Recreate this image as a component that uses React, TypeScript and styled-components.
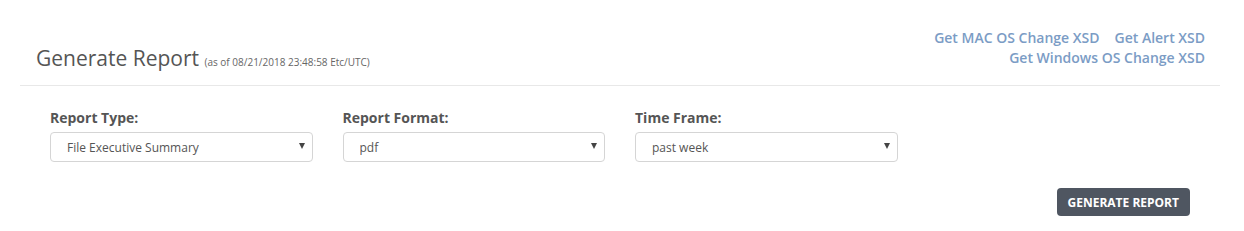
import React from "react";
import styled, { createGlobalStyle } from "styled-components";

const Global = createGlobalStyle`
  html, body { margin: 0; padding: 0; background: #fff; }
  body { font-family: "Open Sans", "Liberation Sans", sans-serif; color: #555; }
  * { box-sizing: border-box; }
`;

const Page = styled.div`
  width: 1244px;
  height: 231px;
  background: #fff;
`;

const Header = styled.div`
  margin: 0 24px 0 20px;
  padding: 28px 15px 17px 16px;
  display: flex;
  justify-content: space-between;
  align-items: flex-end;
  border-bottom: 1px solid #e8e8e8;
`;

const Title = styled.h1`
  margin: 0 0 -6px 0;
  font-size: 21px;
  font-weight: 400;
  line-height: 24px;
  color: #555;
`;

const Sub = styled.small`
  font-size: 10px;
  color: #666;
`;

const Links = styled.div`
  display: flex;
  flex-direction: column;
  align-items: flex-end;
  font-size: 14px;
  line-height: 20px;
`;

const LinkRow = styled.div`
  display: flex;
  gap: 15px;
`;

const Link = styled.a`
  color: #7b9cc5;
  font-weight: 600;
  text-decoration: none;
`;

const Form = styled.div`
  width: 1170px;
  margin: 22px 0 0 35px;
`;

const Row = styled.div`
  display: grid;
  grid-template-columns: repeat(4, 292.5px);
`;

const Col = styled.div`
  padding: 0 15px;
`;

const Label = styled.label`
  display: block;
  font-size: 14px;
  font-weight: 700;
  line-height: 20px;
  color: #555;
  margin-bottom: 4px;
`;

const SelectWrap = styled.div`
  position: relative;
`;

const Select = styled.select`
  appearance: none;
  -webkit-appearance: none;
  width: 100%;
  height: 30px;
  border: 1px solid #d5d5d5;
  border-radius: 4px;
  background: #fff;
  padding: 1px 24px 0 16px;
  font-family: "Open Sans", "Liberation Sans", sans-serif;
  font-size: 12px;
  color: #555;
  outline: none;
`;

const Arrow = styled.span`
  position: absolute;
  right: 8px;
  top: 11px;
  width: 0;
  height: 0;
  border-left: 3.5px solid transparent;
  border-right: 3.5px solid transparent;
  border-top: 6px solid #444;
  pointer-events: none;
`;

const Actions = styled.div`
  display: flex;
  justify-content: flex-end;
  padding: 0 15px;
  margin-top: 26px;
`;

const Button = styled.button`
  height: 28px;
  padding: 0 11px;
  border: none;
  border-radius: 4px;
  background: #4f5661;
  color: #fff;
  font-family: "Open Sans", "Liberation Sans", sans-serif;
  font-size: 12px;
  font-weight: 700;
  text-transform: uppercase;
`;

const fields = [
  { label: "Report Type:", value: "File Executive Summary" },
  { label: "Report Format:", value: "pdf" },
  { label: "Time Frame:", value: "past week" },
];

export default function App() {
  return (
    <Page>
      <Global />
      <Header>
        <Title>
          Generate Report <Sub>(as of 08/21/2018 23:48:58 Etc/UTC)</Sub>
        </Title>
        <Links>
          <LinkRow>
            <Link href="#">Get MAC OS Change XSD</Link>
            <Link href="#">Get Alert XSD</Link>
          </LinkRow>
          <Link href="#">Get Windows OS Change XSD</Link>
        </Links>
      </Header>
      <Form>
        <Row>
          {fields.map((f) => (
            <Col key={f.label}>
              <Label>{f.label}</Label>
              <SelectWrap>
                <Select defaultValue={f.value}>
                  <option>{f.value}</option>
                </Select>
                <Arrow />
              </SelectWrap>
            </Col>
          ))}
        </Row>
        <Actions>
          <Button>Generate Report</Button>
        </Actions>
      </Form>
    </Page>
  );
}
